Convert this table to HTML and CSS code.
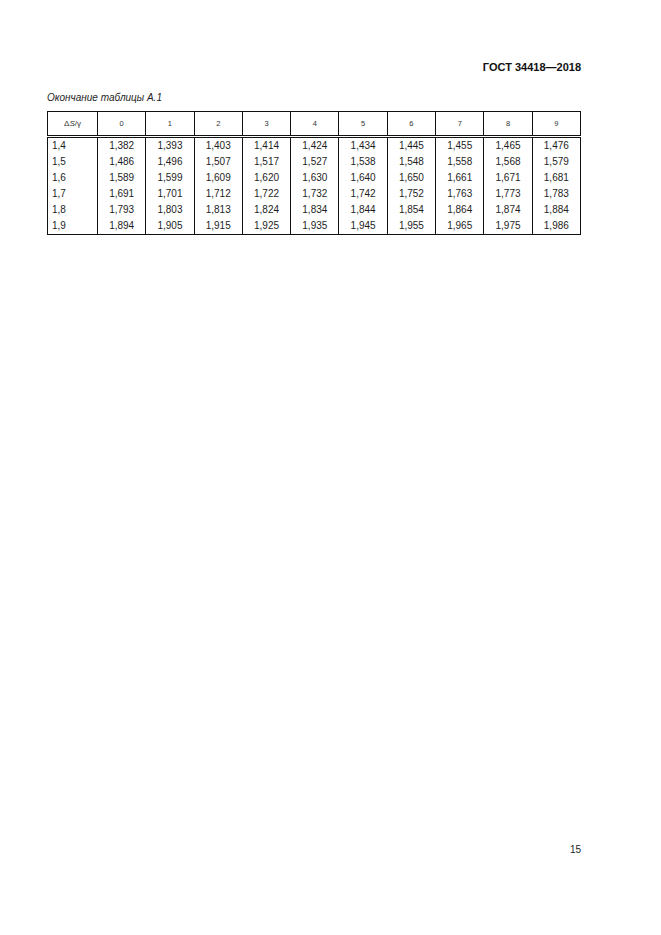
FILE: index.html
```html
<!DOCTYPE html>
<html lang="ru">
<head>
<meta charset="utf-8">
<title>ГОСТ 34418—2018</title>
<link rel="stylesheet" href="styles.css">
</head>
<body>
<div class="page">
  <div class="doc-code">ГОСТ 34418—2018</div>
  <div class="caption">Окончание таблицы А.1</div>
  <table class="data">
    <colgroup>
      <col class="c-first">
      <col><col><col><col><col><col><col><col><col><col>
    </colgroup>
    <thead>
      <tr>
        <th class="h-first">Δ<i>S</i>/γ</th>
        <th>0</th><th>1</th><th>2</th><th>3</th><th>4</th><th>5</th><th>6</th><th>7</th><th>8</th><th>9</th>
      </tr>
    </thead>
    <tbody>
      <tr><td class="rk">1,4</td><td>1,382</td><td>1,393</td><td>1,403</td><td>1,414</td><td>1,424</td><td>1,434</td><td>1,445</td><td>1,455</td><td>1,465</td><td>1,476</td></tr>
      <tr><td class="rk">1,5</td><td>1,486</td><td>1,496</td><td>1,507</td><td>1,517</td><td>1,527</td><td>1,538</td><td>1,548</td><td>1,558</td><td>1,568</td><td>1,579</td></tr>
      <tr><td class="rk">1,6</td><td>1,589</td><td>1,599</td><td>1,609</td><td>1,620</td><td>1,630</td><td>1,640</td><td>1,650</td><td>1,661</td><td>1,671</td><td>1,681</td></tr>
      <tr><td class="rk">1,7</td><td>1,691</td><td>1,701</td><td>1,712</td><td>1,722</td><td>1,732</td><td>1,742</td><td>1,752</td><td>1,763</td><td>1,773</td><td>1,783</td></tr>
      <tr><td class="rk">1,8</td><td>1,793</td><td>1,803</td><td>1,813</td><td>1,824</td><td>1,834</td><td>1,844</td><td>1,854</td><td>1,864</td><td>1,874</td><td>1,884</td></tr>
      <tr><td class="rk">1,9</td><td>1,894</td><td>1,905</td><td>1,915</td><td>1,925</td><td>1,935</td><td>1,945</td><td>1,955</td><td>1,965</td><td>1,975</td><td>1,986</td></tr>
    </tbody>
  </table>
  <div class="page-num">15</div>
</div>
</body>
</html>
```

FILE: styles.css
```css
html, body {
  margin: 0;
  padding: 0;
  background: #ffffff;
}

body {
  font-family: "Liberation Sans", Arial, sans-serif;
  color: #1e1e1e;
}

.page {
  box-sizing: border-box;
  width: 661px;
  min-height: 935px;
  padding: 59px 80px 78px 47px;
  display: flex;
  flex-direction: column;
}

.doc-code {
  align-self: flex-end;
  font-size: 11px;
  font-weight: bold;
  line-height: 16px;
  color: #111;
}

.caption {
  margin-top: 16px;
  font-size: 10px;
  font-style: italic;
  line-height: 14px;
}

.data {
  margin-top: 6px;
  width: 534px;
  border-collapse: collapse;
  table-layout: fixed;
}

.data col.c-first {
  width: 50px;
}

.data th {
  height: 23px;
  padding: 0;
  font-size: 7.5px;
  font-weight: normal;
  text-align: center;
  vertical-align: middle;
  color: #333;
  border: 1px solid #111;
  border-bottom: 3px double #111;
}

.data th.h-first {
  font-size: 8px;
}

.data td {
  height: 16px;
  padding: 0;
  font-size: 10px;
  line-height: 16px;
  text-align: center;
  border-left: 1px solid #111;
  border-right: 1px solid #111;
}

.data td.rk {
  text-align: left;
  padding-left: 4px;
}

.data tbody tr:last-child td {
  border-bottom: 1px solid #111;
}

.page-num {
  margin-top: auto;
  align-self: flex-end;
  font-size: 10px;
  line-height: 14px;
}
```
